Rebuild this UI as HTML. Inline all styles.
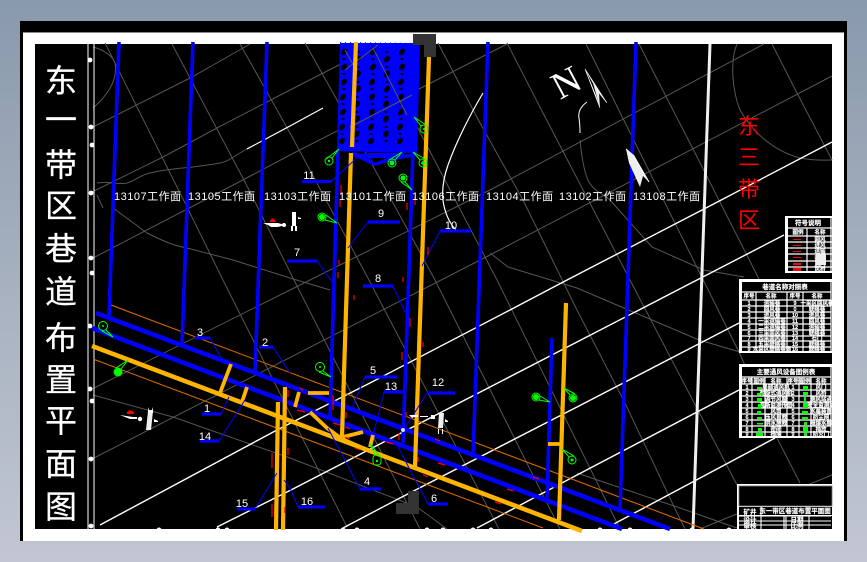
<!DOCTYPE html>
<html><head><meta charset="utf-8"><style>
html,body{margin:0;padding:0;width:867px;height:562px;overflow:hidden;background:#a8b2c0}
svg{display:block}
text{font-family:"Liberation Sans","WenQuanYi Zen Hei","Noto Sans CJK SC",sans-serif}
.t{font-size:32px;fill:#fff;stroke:#fff;stroke-width:.25px;text-anchor:middle;font-family:"Noto Sans CJK SC","WenQuanYi Zen Hei",sans-serif}
.r{font-size:22px;fill:#f00;text-anchor:middle;font-family:"Noto Sans CJK SC","WenQuanYi Zen Hei",sans-serif}
.w{font-size:11px;fill:#fff;letter-spacing:.5px}
.n{font-size:11px;fill:#fff;text-anchor:middle}
.s{font-size:6.500px;fill:#fff;stroke:#fff;stroke-width:.15px;text-anchor:middle;font-weight:bold}
.s5{font-size:5.500px;fill:#fff;stroke:#fff;stroke-width:.15px;text-anchor:middle;font-weight:bold}
.c text{font-size:5.500px;fill:#fff;stroke:#fff;stroke-width:.15px;text-anchor:middle;font-weight:bold}
</style></head><body>
<svg width="867" height="562" viewBox="0 0 867 562" xmlns="http://www.w3.org/2000/svg">
<defs>
<linearGradient id="bg" x1="0" y1="0" x2="0" y2="1"><stop offset="0" stop-color="#8999ac"/><stop offset=".55" stop-color="#a9b3c1"/><stop offset="1" stop-color="#c2c6d2"/></linearGradient>
</defs>
<rect width="867" height="562" fill="url(#bg)"/>
<rect x="20" y="21" width="827" height="520" fill="#000"/>
<rect x="23" y="32" width="821" height="509" fill="#fff"/>
<rect x="23" y="32" width="821" height="1" fill="#888"/>
<rect x="35" y="44" width="797" height="485" fill="#000"/>

<!-- gray grid -->
<g stroke="#565656" stroke-width="1" fill="none">
<path d="M93 127L192 77L250 44M90 193L163 157L217 128L290 90L380 44M93 258L220 192L290 155L507 44M90 390L290 290L490 190L764 44M90 460L490 255L832 76M700 529L832 475"/>
<path d="M105 43L187 207L223 280L347 527M172 44L245 182L294 280L420 529M240 44L290 133L369 280L499 529M305 43L337 100L435 280L560 529M375 45L412 117L497 280L620 529M438 43L480 123L523 200L577 310L625 403L677 513L685 529M507 43L543 113L630 280L760 529M586 44L739 352L777 438L800 483M639 44L692 147L761 283M772 44L797 93L832 160"/>
<path d="M93 47C105 50 113 57 115 63C118 80 108 95 93 108M97 183C110 181 120 185 127 183C135 181 140 175 150 173C170 168 190 168 200 166C215 164 225 163 230 159L250 147"/>
<path d="M97 195L103 208M113 208L147 233C165 242 175 246 187 248L233 260L290 278L330 290M93 395L173 417L290 458L417 507L447 529M490 253L508 267L577 288L699 340L740 352M577 473L677 507L737 528"/>
<path d="M737 44C730 60 732 90 740 110C750 128 770 150 800 158C815 161 825 160 832 160M580 140C582 160 585 175 589 182C595 192 605 195 610 200L652 247L704 270L744 277"/>
</g>

<!-- left rails -->
<path d="M88 44V529M94 44V529" stroke="#fff" stroke-width="1" fill="none"/>
<g fill="#fff">
<circle cx="90" cy="60" r="2.400"/><circle cx="91" cy="127" r="2.400"/><circle cx="92" cy="145" r="2.400"/><circle cx="91" cy="193" r="2.400"/><circle cx="91" cy="258" r="2.400"/><circle cx="92" cy="273" r="2.400"/><circle cx="90" cy="326" r="2.400"/><circle cx="90" cy="389" r="2.400"/><circle cx="92" cy="401" r="2.400"/><circle cx="91" cy="459" r="2.400"/><circle cx="91" cy="526" r="2.400"/>
<circle cx="159" cy="530" r="2.500"/><circle cx="218" cy="530" r="2.500"/><circle cx="227" cy="530" r="2.500"/><circle cx="343" cy="530" r="2.500"/><circle cx="357" cy="530" r="2.500"/><circle cx="427" cy="530" r="2.500"/><circle cx="443" cy="530" r="2.500"/><circle cx="473" cy="530" r="2.500"/><circle cx="491" cy="530" r="2.500"/><circle cx="600" cy="530" r="2.500"/><circle cx="630" cy="530" r="2.500"/><circle cx="692" cy="530" r="2.500"/><circle cx="729" cy="530" r="2.500"/>
</g>

<!-- white lines -->
<g stroke="#fff" fill="none">
<path d="M832 142L704 209L567 280L510 310L370 383L277 430L100 525" stroke-width="1.400"/>
<path d="M784 235L697 280L577 342L490 387L291 490L217 527" stroke-width="1.400"/>
<path d="M739 323L577 407L400 498L343 528" stroke-width="1.400"/>
<path d="M739 390L577 475L477 528" stroke-width="1.400"/>
<path d="M775 438L612 525" stroke-width="1.400"/>
<path d="M247 149L290 126L323 108" stroke-width="1.200"/>
<path d="M483 93C470 115 457 140 448 165C441 185 442 200 445 210C448 220 452 226 456 230" stroke-width="1.200"/>
<path d="M710 44L693 529" stroke-width="3" stroke="#f0f0f0"/>
<path d="M587 102C580 107 578 112 579 118C580 124 580 128 580 133" stroke-width="1"/>
</g>

<!-- thin orange -->
<path d="M111 305L704 529M93 359L543 528" stroke="#e06c00" stroke-width="1" fill="none"/>

<!-- hatched block -->
<path d="M341 43L419 44L416 152L338 150Z" fill="#0000ff" stroke="#0000ff" stroke-width="2"/>
<g fill="#000">
<ellipse cx="344" cy="52" rx="2.500" ry="3.700" transform="rotate(35 344 52)"/><ellipse cx="373" cy="52" rx="2.500" ry="3.700" transform="rotate(35 373 52)"/><ellipse cx="402" cy="52" rx="2.500" ry="3.700" transform="rotate(35 402 52)"/>
<ellipse cx="344" cy="67" rx="2.500" ry="3.700" transform="rotate(35 344 67)"/><ellipse cx="373" cy="67" rx="2.500" ry="3.700" transform="rotate(35 373 67)"/><ellipse cx="402" cy="67" rx="2.500" ry="3.700" transform="rotate(35 402 67)"/>
<ellipse cx="344" cy="82" rx="2.500" ry="3.700" transform="rotate(35 344 82)"/><ellipse cx="372" cy="82" rx="2.500" ry="3.700" transform="rotate(35 372 82)"/><ellipse cx="401" cy="82" rx="2.500" ry="3.700" transform="rotate(35 401 82)"/>
<ellipse cx="343" cy="97" rx="2.500" ry="3.700" transform="rotate(35 343 97)"/><ellipse cx="372" cy="97" rx="2.500" ry="3.700" transform="rotate(35 372 97)"/><ellipse cx="401" cy="97" rx="2.500" ry="3.700" transform="rotate(35 401 97)"/>
<ellipse cx="343" cy="112" rx="2.500" ry="3.700" transform="rotate(35 343 112)"/><ellipse cx="372" cy="112" rx="2.500" ry="3.700" transform="rotate(35 372 112)"/><ellipse cx="401" cy="112" rx="2.500" ry="3.700" transform="rotate(35 401 112)"/>
<ellipse cx="342" cy="127" rx="2.500" ry="3.700" transform="rotate(35 342 127)"/><ellipse cx="371" cy="127" rx="2.500" ry="3.700" transform="rotate(35 371 127)"/><ellipse cx="400" cy="127" rx="2.500" ry="3.700" transform="rotate(35 400 127)"/>
<ellipse cx="342" cy="141" rx="2.500" ry="3.700" transform="rotate(35 342 141)"/><ellipse cx="371" cy="141" rx="2.500" ry="3.700" transform="rotate(35 371 141)"/><ellipse cx="400" cy="141" rx="2.500" ry="3.700" transform="rotate(35 400 141)"/>
<ellipse cx="358" cy="59" rx="2.500" ry="3.700" transform="rotate(35 358 59)"/><ellipse cx="387" cy="59" rx="2.500" ry="3.700" transform="rotate(35 387 59)"/>
<ellipse cx="358" cy="74" rx="2.500" ry="3.700" transform="rotate(35 358 74)"/><ellipse cx="387" cy="74" rx="2.500" ry="3.700" transform="rotate(35 387 74)"/>
<ellipse cx="358" cy="89" rx="2.500" ry="3.700" transform="rotate(35 358 89)"/><ellipse cx="387" cy="89" rx="2.500" ry="3.700" transform="rotate(35 387 89)"/>
<ellipse cx="357" cy="104" rx="2.500" ry="3.700" transform="rotate(35 357 104)"/><ellipse cx="386" cy="104" rx="2.500" ry="3.700" transform="rotate(35 386 104)"/>
<ellipse cx="357" cy="119" rx="2.500" ry="3.700" transform="rotate(35 357 119)"/><ellipse cx="386" cy="119" rx="2.500" ry="3.700" transform="rotate(35 386 119)"/>
<ellipse cx="357" cy="134" rx="2.500" ry="3.700" transform="rotate(35 357 134)"/><ellipse cx="386" cy="134" rx="2.500" ry="3.700" transform="rotate(35 386 134)"/>
<ellipse cx="358" cy="52" rx="1.700" ry="1"/><ellipse cx="387" cy="52" rx="1.700" ry="1"/><ellipse cx="358" cy="67" rx="1.700" ry="1"/><ellipse cx="387" cy="67" rx="1.700" ry="1"/><ellipse cx="358" cy="82" rx="1.700" ry="1"/><ellipse cx="387" cy="82" rx="1.700" ry="1"/><ellipse cx="357" cy="97" rx="1.700" ry="1"/><ellipse cx="386" cy="97" rx="1.700" ry="1"/><ellipse cx="357" cy="112" rx="1.700" ry="1"/><ellipse cx="386" cy="112" rx="1.700" ry="1"/><ellipse cx="357" cy="127" rx="1.700" ry="1"/><ellipse cx="386" cy="127" rx="1.700" ry="1"/><ellipse cx="357" cy="141" rx="1.700" ry="1"/><ellipse cx="386" cy="141" rx="1.700" ry="1"/>
<ellipse cx="344" cy="59" rx="1.700" ry="1"/><ellipse cx="373" cy="59" rx="1.700" ry="1"/><ellipse cx="402" cy="59" rx="1.700" ry="1"/><ellipse cx="344" cy="74" rx="1.700" ry="1"/><ellipse cx="373" cy="74" rx="1.700" ry="1"/><ellipse cx="402" cy="74" rx="1.700" ry="1"/><ellipse cx="344" cy="89" rx="1.700" ry="1"/><ellipse cx="372" cy="89" rx="1.700" ry="1"/><ellipse cx="401" cy="89" rx="1.700" ry="1"/><ellipse cx="343" cy="104" rx="1.700" ry="1"/><ellipse cx="372" cy="104" rx="1.700" ry="1"/><ellipse cx="401" cy="104" rx="1.700" ry="1"/><ellipse cx="343" cy="119" rx="1.700" ry="1"/><ellipse cx="372" cy="119" rx="1.700" ry="1"/><ellipse cx="401" cy="119" rx="1.700" ry="1"/><ellipse cx="342" cy="134" rx="1.700" ry="1"/><ellipse cx="371" cy="134" rx="1.700" ry="1"/><ellipse cx="400" cy="134" rx="1.700" ry="1"/>
</g>
<path d="M345 70L378 45M350 127L412 95M373 48L407 115M345 50L355 68" stroke="#565656" stroke-width="1" fill="none"/>
<path d="M338 146L416 148L416 153L338 151Z" fill="#0000ff"/>
<path d="M341 42.500H413" stroke="#fff" stroke-width="1" stroke-dasharray="4 1" fill="none"/>
<path d="M352 152L368 155L374 163L382 160L395 155L412 154L412 157L395 160L374 166L358 158L352 156Z" fill="#0000ff"/>
<path d="M362 153h42v5h-8v4h-8v-4h-18Z" fill="#0000ff"/>

<!-- blue -->
<g stroke="#0000ff" fill="none" stroke-linecap="butt">
<path d="M119 42L109 316M193 42L182 345M267 42L255 372M338 150L330 417M413 152L403 443M488 42L473 455M636 42L620 510M552 338L547 498" stroke-width="3.600"/>
<path d="M96 313L670 529M92 328L622 529" stroke-width="4.600"/>
</g>

<!-- orange -->
<g stroke="#ffb400" fill="none">
<path d="M92 346L582 531" stroke-width="4.500"/>
<path d="M356 42L352 147M351 153L342 437M429 57L415 467M566 303L559 520M285 387L283 530M278 402L276 530" stroke-width="4.200"/>
<path d="M231 364L220 393M247 387L242 402M548 444H562M299 392L295 407M308 393H329M310 412L327 428L342 439M343 437L363 432M373 435L370 447M342 439L372 452" stroke-width="3.800"/>
</g>

<!-- gray L blocks -->
<path d="M413 34H436V57H424V45H413Z" fill="#333"/>
<path d="M408 491H419V514H396V503H408Z" fill="#333"/>

<!-- leaders and bars -->
<g stroke="#0000ff" stroke-width="1" fill="none">
<path d="M332 181L360 155M368 222L348 248M317 261L333 283M440 231L422 266M393 286L405 312M210 338L222 360M273 347L290 373M221 414L229 397M219 441L245 400M255 509L277 473M298 507L290 488L284 480M365 377L352 408M384 392L373 435M427 393L405 428M360 489L328 428M428 504L397 445"/>
</g>
<g stroke="#0000ff" stroke-width="3.200" fill="none">
<path d="M302 181.500H332M368 222H400M287 261H317M440 231H471M363 286H393M195 338H210M259 347H273M202 414H221M200 441H219M237 509H255M298 507H325M365 377H397M384 392H405M427 393H455M360 489H381M428 504H448"/>
</g>
<g>
<text class="n" x="309" y="179">11</text><text class="n" x="381" y="217">9</text><text class="n" x="297" y="256">7</text><text class="n" x="451" y="229">10</text><text class="n" x="378" y="282">8</text><text class="n" x="200" y="336">3</text><text class="n" x="265" y="346">2</text><text class="n" x="207" y="412">1</text><text class="n" x="205" y="440">14</text><text class="n" x="242" y="507">15</text><text class="n" x="307" y="505">16</text><text class="n" x="373" y="374">5</text><text class="n" x="391" y="390">13</text><text class="n" x="438" y="386">12</text><text class="n" x="367" y="485">4</text><text class="n" x="434" y="502">6</text>
</g>

<!-- red dashes -->
<path d="M341 185V195M340 200V207M407 203V210M415 198V205M428 247V255M339 260V265M338 272V278M403 277V282M354 295V300M410 318V327M423 342V347M402 352V360M333 395V410M346 412V418M399 433V440M418 457V462M406 412V417M272 453V468M272 504V517M285 507V513M288 448V455M288 390V397M300 388L303 390M297 410L305 412M333 423L340 425M345 427L350 429M345 437L350 439M355 448L360 450M386 442L393 444M435 439L440 441M438 463L445 465M423 475L428 477M495 502L501 504M507 489L513 491M533 477L539 479" stroke="#f00" stroke-width="1.200" fill="none"/>

<!-- green markers -->
<g stroke="#00ff00" stroke-width="1" fill="none">
<circle cx="329" cy="161" r="4"/><path d="M332 158L339 149M326 159L339 149"/>
<circle cx="392" cy="163" r="4"/><path d="M395 160L402 152M389 160L402 152"/>
<circle cx="423" cy="163" r="4"/><path d="M420 160L413 152M425 159L413 152"/>
<circle cx="424" cy="129" r="4"/><path d="M421 126L414 117M426 125L414 117"/>
<circle cx="403" cy="178" r="4"/><path d="M405 182L412 190M401 182L412 190"/>
<circle cx="322" cy="217" r="4"/><path d="M326 215L337 223M325 220L337 223"/>
<circle cx="103" cy="326" r="4.500"/><path d="M106 330L113 337M102 331L113 337"/>
<circle cx="118" cy="372" r="4"/><path d="M121 369L128 360M116 368L128 360"/>
<circle cx="320" cy="367" r="4.500"/><path d="M323 371L331 377M319 372L331 377"/>
<rect x="373" y="455" width="8" height="10" rx="3"/><path d="M375 455L370 444M379 455L370 444"/>
<circle cx="536" cy="397" r="4"/><path d="M540 396L550 402M539 400L550 402"/>
<circle cx="573" cy="398" r="4"/><path d="M570 395L564 388M575 394L564 388"/>
<circle cx="572" cy="460" r="4"/><path d="M569 457L562 449M574 456L562 449"/>
</g>
<g fill="#00ff00">
<circle cx="329" cy="161" r="1.200"/><circle cx="392" cy="163" r="2.500"/><circle cx="423" cy="163" r="1.800"/><circle cx="424" cy="129" r="1"/><circle cx="403" cy="178" r="2.500"/><circle cx="322" cy="217" r="3"/><circle cx="103" cy="326" r="1"/><circle cx="118" cy="372" r="3.500"/><circle cx="320" cy="367" r="1"/><circle cx="377" cy="461" r="1.200"/><circle cx="536" cy="397" r="3"/><circle cx="573" cy="398" r="3"/><circle cx="572" cy="460" r="1.500"/>
</g>

<!-- white survey figures -->
<g fill="#fff">
<path d="M263 223H278L285 225L278 227H271L268 225Z"/><circle cx="284" cy="225" r="2"/>
<rect x="292" y="212" width="4" height="14"/><path d="M291 226h2v5h-2zM295 226h2v5h-2zM298 217l3 1v1h-3z"/>
<path d="M120 415L133 417H137V419H130Z"/><circle cx="140" cy="419" r="2.200"/>
<path d="M148 411L153 411L151 430H146Z" fill="#eee"/>
<path d="M148 407l1 3h3l1-3v6h-5zM154 419l4 2v1h-4z"/>
<path d="M409 415H418V417H414L412 418ZM420 416H428V417H420Z"/><rect x="431" y="415" width="4" height="4"/>
<path d="M439 413L444 413L443 428H438Z" fill="#eee"/>
<path d="M438 429h1v5h-1zM442 429h1v5h-1zM445 419l3 2v1h-3z"/>
<circle cx="403" cy="430" r="2" fill="#dde"/>
</g>
<g fill="#f00"><path d="M127 412L130 410L134 412V414H127Z"/><path d="M270 221L272 218L276 221V222H270Z"/></g>

<!-- north arrows -->
<text x="0" y="0" font-size="38" fill="#fff" style="font-family:'Liberation Serif',serif" transform="translate(560 100) rotate(-28)">N</text>
<path d="M585 69L600 108L596 96Z M585 69L607 103L599 93Z" fill="#fff" stroke="#fff" stroke-width=".6"/>
<path d="M593 83L607 103L599 93L600 108Z" fill="#eee"/>
<path d="M626 149L634 156L649 182L643 176L640 187L629 163Z" fill="#eee"/>
<path d="M626 149L634 156L649 182" stroke="#fff" fill="none" stroke-width="1"/>

<!-- work face labels -->
<text class="w" x="114" y="200">13107工作面</text>
<text class="w" x="188" y="200">13105工作面</text>
<text class="w" x="264" y="200">13103工作面</text>
<text class="w" x="339" y="200">13101工作面</text>
<text class="w" x="412" y="200">13106工作面</text>
<text class="w" x="486" y="200">13104工作面</text>
<text class="w" x="559" y="200">13102工作面</text>
<text class="w" x="633" y="200">13108工作面</text>

<!-- main titles -->
<text class="t" x="61" y="92">东</text><text class="t" x="61" y="131">一</text><text class="t" x="61" y="176">带</text><text class="t" x="61" y="217">区</text><text class="t" x="61" y="260">巷</text><text class="t" x="61" y="303">道</text><text class="t" x="61" y="349">布</text><text class="t" x="61" y="391">置</text><text class="t" x="61" y="432">平</text><text class="t" x="61" y="475">面</text><text class="t" x="61" y="518">图</text>
<text class="r" x="749" y="134">东</text><text class="r" x="749" y="165">三</text><text class="r" x="749" y="197">带</text><text class="r" x="749" y="228">区</text>

<!-- table 1 -->
<rect x="785" y="216" width="47" height="57" fill="#fff"/>
<rect x="788" y="218" width="44" height="53" fill="#000"/>
<path d="M788 228H832M788 236H832M788 242H832M788 248H832M788 254H832M788 261H832M788 267H832M807 228V271M831 218V271" stroke="#fff" fill="none" stroke-width="1.200"/>
<text class="s" x="808" y="225">符号说明</text>
<text class="s5" x="798" y="234">图例</text><text class="s5" x="820" y="234">名称</text>
<path d="M793 239.500H801M793 245.500H801M793 251.500H801M793 257.500H801" stroke="#f00" stroke-width="1"/>
<path d="M793 263H801V265H793ZM793 268H801V271H793Z" fill="#f00"/>
<text class="s5" x="820" y="241">回风</text><text class="s5" x="820" y="247">进风</text><text class="s5" x="820" y="253">运输</text><text class="s5" x="820" y="260">密闭</text><text class="s5" x="820" y="266">风门</text><text class="s5" x="820" y="271">风桥</text>
<rect x="816" y="254" width="10" height="11" fill="#eee"/>

<!-- table 2 -->
<rect x="739" y="279" width="93" height="74" fill="#fff"/>
<rect x="742" y="282" width="90" height="69" fill="#000"/>
<path d="M742 292H831M742 300H831M742 306H831M742 312H831M742 318H831M742 324H831M742 330H831M742 336H831M742 341H831M742 347H831M756 292V351M787 292V351M803 292V351M831 282V351" stroke="#fff" fill="none" stroke-width="1.200"/>
<text class="s" x="785" y="289">巷道名称对照表</text>
<g class="c">
<text x="749" y="298">序号</text><text x="771" y="298">名称</text><text x="795" y="298">序号</text><text x="817" y="298">名称</text>
<text x="749" y="305">1</text><text x="772" y="305">运输巷</text><text x="795" y="305">9</text><text x="817" y="305">一采区回风巷</text>
<text x="749" y="311">2</text><text x="772" y="311">回风巷</text><text x="795" y="311">0</text><text x="817" y="311">联络巷</text>
<text x="749" y="317">3</text><text x="772" y="317">进风巷</text><text x="795" y="317">10</text><text x="817" y="317">进风巷</text>
<text x="749" y="323">4</text><text x="772" y="323">一采运输巷</text><text x="795" y="323">11</text><text x="817" y="323">回风巷</text>
<text x="749" y="329">5</text><text x="772" y="329">二采运输巷</text><text x="795" y="329">12</text><text x="817" y="329">运输巷</text>
<text x="749" y="335">6</text><text x="772" y="335">三采回风巷</text><text x="795" y="335">13</text><text x="817" y="335">联络巷</text>
<text x="749" y="340">7</text><text x="772" y="340">四采回风巷</text><text x="795" y="340">14</text><text x="817" y="340">石门</text>
<text x="749" y="346">8</text><text x="772" y="346">五采联络巷</text><text x="795" y="346">15</text><text x="817" y="346">联络巷</text>
<text x="749" y="351">9</text><text x="772" y="351">六采区联络巷道</text><text x="795" y="351">16</text><text x="817" y="351">联络巷</text>
</g>

<!-- table 3 -->
<rect x="739" y="364" width="93" height="74" fill="#fff"/>
<rect x="742" y="367" width="90" height="69" fill="#000"/>
<path d="M742 377H831M742 384H831M742 390H831M742 396H831M742 402H831M742 408H831M742 414H831M742 420H831M742 426H831M742 432H831M752 377V436M765 377V436M787 377V436M799 377V436M811 377V436M831 367V436" stroke="#fff" fill="none" stroke-width="1.200"/>
<text class="s" x="786" y="374">主要通风设备图例表</text>
<g class="c">
<text x="747" y="383">序号</text><text x="759" y="383">图例</text><text x="776" y="383">名称</text><text x="793" y="383">序号</text><text x="805" y="383">图例</text><text x="821" y="383">名称</text>
<text x="747" y="389">1</text><text x="776" y="389">局部通风机</text><text x="793" y="389">1</text><text x="821" y="389">风门</text>
<text x="747" y="395">2</text><text x="776" y="395">对旋式通风机</text><text x="793" y="395">2</text><text x="821" y="395">风桥</text>
<text x="747" y="401">3</text><text x="776" y="401">调节风窗</text><text x="793" y="401">3</text><text x="821" y="401">测风站点</text>
<text x="747" y="407">4</text><text x="776" y="407">瓦斯监测传感</text><text x="793" y="407">4</text><text x="821" y="407">安全监测站</text>
<text x="747" y="413">5</text><text x="776" y="413">风筒</text><text x="793" y="413">5</text><text x="821" y="413">水幕装置</text>
<text x="747" y="419">6</text><text x="776" y="419">压风自救</text><text x="793" y="419">6</text><text x="821" y="419">防尘网</text>
<text x="747" y="425">7</text><text x="776" y="425">供水施救</text><text x="793" y="425">7</text><text x="821" y="425">隔爆水棚</text>
<text x="747" y="431">8</text><text x="776" y="431">密闭</text><text x="793" y="431">8</text><text x="821" y="431">抽放</text>
<text x="747" y="436">9</text><text x="776" y="436">挡墙</text><text x="793" y="436">9</text><text x="821" y="436">防火门</text>
</g>
<g fill="#00ff00">
<rect x="757" y="387" width="5" height="2"/><rect x="757" y="393" width="6" height="2"/><rect x="757" y="398" width="5" height="4"/><rect x="758" y="404" width="3" height="5"/><rect x="757" y="411" width="4" height="3"/><rect x="757" y="417" width="5" height="2"/><rect x="757" y="423" width="6" height="1.500"/><rect x="758" y="428" width="4" height="3"/><rect x="756" y="433" width="7" height="3"/>
<rect x="803" y="386" width="5" height="4"/><rect x="803" y="392" width="5" height="3"/><rect x="804" y="397" width="2" height="5"/><rect x="803" y="403" width="5" height="5"/><rect x="802" y="411" width="6" height="3"/><rect x="802" y="417" width="6" height="2"/><rect x="804" y="422" width="3" height="3"/><rect x="803" y="427" width="5" height="5"/><rect x="804" y="433" width="3" height="3"/>
</g>

<!-- title block -->
<rect x="737" y="484" width="95" height="45" fill="#fff"/>
<rect x="739" y="486" width="93" height="20" fill="#000" stroke="#777" stroke-width=".8"/>
<rect x="739" y="507" width="93" height="8" fill="#000"/>
<rect x="739" y="516" width="93" height="13" fill="#000"/>
<path d="M739 516H831M739 521H831M739 525H831M761 507V529M784 516V529M786 516V529M809 516V529" stroke="#fff" stroke-width="1.100" fill="none"/>
<text class="s" x="750" y="514">矿井</text>
<text class="s" x="795" y="513">东一带区巷道布置平面图</text>
<text class="s" x="750" y="522">设计</text><text class="s" x="750" y="528">审核</text>
<text class="s" x="797" y="522">日期</text><text class="s" x="797" y="528">比例</text>
</svg>
</body></html>
